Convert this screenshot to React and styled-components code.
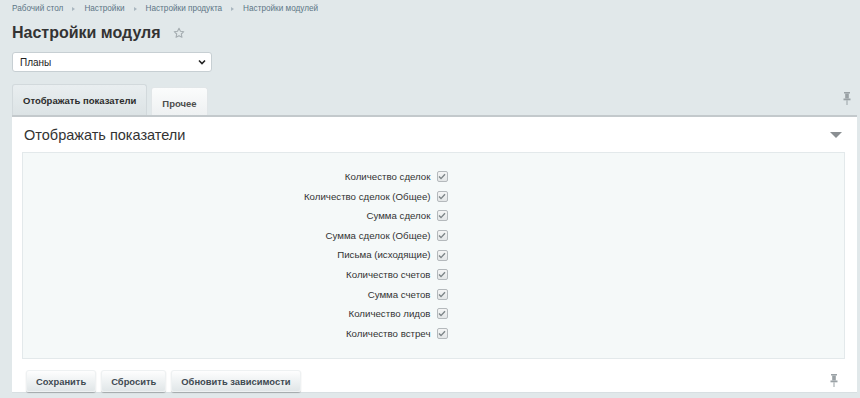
import React from 'react';
import styled, { createGlobalStyle } from 'styled-components';

const GlobalStyle = createGlobalStyle`
  html, body {
    margin: 0;
    padding: 0;
    background: #e1e8ea;
    font-family: 'Liberation Sans', Arial, sans-serif;
    color: #333;
  }
`;

const Page = styled.div`
  width: 860px;
  height: 398px;
  overflow: hidden;
  padding: 0 3px 0 12px;
  box-sizing: border-box;
`;

const Breadcrumbs = styled.div`
  display: flex;
  align-items: center;
  gap: 9px;
  height: 17px;
  font-size: 8.2px;
  color: #5d7686;
`;

const Arrow = styled.span`
  width: 0;
  height: 0;
  border-left: 3px solid #a9b7bf;
  border-top: 2.5px solid transparent;
  border-bottom: 2.5px solid transparent;
`;

const TitleRow = styled.div`
  display: flex;
  align-items: center;
  gap: 12px;
  height: 32px;
`;

const Title = styled.h1`
  margin: 0;
  font-size: 16px;
  font-weight: bold;
  color: #333;
`;

const Select = styled.div`
  width: 200px;
  height: 20px;
  box-sizing: border-box;
  margin-top: 3px;
  background: #fff;
  border: 1px solid #c7cfd3;
  border-radius: 3px;
  display: flex;
  align-items: center;
  justify-content: space-between;
  padding: 0 5px 0 7px;
  font-size: 10px;
  color: #222;
`;

const TabBar = styled.div`
  display: flex;
  align-items: flex-end;
  gap: 4px;
  height: 43px;
`;

const Tab = styled.div`
  height: ${(p) => (p.active ? 31 : 28)}px;
  box-sizing: border-box;
  padding: ${(p) => (p.active ? 0 : 3)}px 10px 0;
  display: flex;
  align-items: center;
  font-size: 9.5px;
  font-weight: bold;
  color: ${(p) => (p.active ? '#2c2c2c' : '#4d4d4d')};
  background: ${(p) =>
    p.active
      ? 'linear-gradient(#e9eef0, #dce3e5)'
      : 'linear-gradient(#fbfcfc, #eef1f2)'};
  border: 1px solid ${(p) => (p.active ? '#d2d9dc' : '#e1e6e8')};
  border-bottom: none;
  border-radius: 3px 3px 0 0;
`;

const PinSlot = styled.div`
  margin-left: auto;
  align-self: center;
  margin-top: 12px;
  margin-right: 6px;
`;

const Panel = styled.div`
  background: #fff;
  border-top: 2px solid #c3c9cc;
  box-shadow: 0 1px 0 #d8dfe2;
  padding: 0 12px 0 10px;
`;

const PanelHead = styled.div`
  display: flex;
  align-items: center;
  justify-content: space-between;
  height: 35px;
  padding: 0 2px;
`;

const PanelTitle = styled.div`
  font-size: 14.5px;
  color: #333;
`;

const Caret = styled.span`
  width: 0;
  height: 0;
  border-top: 6px solid #8a8f92;
  border-left: 6px solid transparent;
  border-right: 6px solid transparent;
  margin-right: 1px;
`;

const Fields = styled.div`
  background: #f5f9f9;
  border: 1px solid #e3e9eb;
  padding: 14px 0 15px;
  display: grid;
  grid-template-columns: 1fr 1fr;
`;

const Label = styled.label`
  text-align: right;
  font-size: 9.7px;
  color: #333;
  padding-right: 3px;
  height: 19.6px;
  line-height: 19.6px;
`;

const CheckCell = styled.div`
  display: flex;
  align-items: center;
  height: 19.6px;
  padding-left: 3px;
`;

const Box = styled.span`
  width: 9px;
  height: 9px;
  border: 1px solid #b4b9bc;
  border-radius: 2px;
  background: linear-gradient(#f4f5f5, #e3e6e7);
  display: flex;
  align-items: center;
  justify-content: center;
`;

const Footer = styled.div`
  display: flex;
  align-items: center;
  gap: 5px;
  padding: 11px 0 0 4px;
`;

const Button = styled.button`
  height: 22px;
  padding: 0 10px;
  font-family: inherit;
  font-size: 9.4px;
  font-weight: bold;
  color: #3f4a52;
  background: linear-gradient(#ffffff, #dfe5e7);
  border: none;
  border-radius: 3px;
  box-shadow: 0 1px 1px rgba(0, 0, 0, 0.25), inset 0 0 0 1px #eef1f2;
`;

const FooterPin = styled.div`
  margin-left: auto;
  margin-right: 7px;
  margin-top: 2px;
`;

function Pin() {
  return (
    <svg width="8" height="13" viewBox="0 0 8 13">
      <rect x="1" y="0" width="6" height="1.5" fill="#9aa1a5" />
      <rect x="2.2" y="1.5" width="3.6" height="5" fill="#9aa1a5" />
      <rect x="0.5" y="6.5" width="7" height="1.8" fill="#9aa1a5" />
      <rect x="3.5" y="8.3" width="1" height="4.7" fill="#9aa1a5" />
    </svg>
  );
}

function Star() {
  return (
    <svg width="12" height="12" viewBox="0 0 24 24">
      <path
        d="M12 2.5l2.9 6.1 6.6.8-4.9 4.6 1.3 6.6L12 17.3l-5.9 3.3 1.3-6.6-4.9-4.6 6.6-.8z"
        fill="none"
        stroke="#a5adb1"
        strokeWidth="2.2"
        strokeLinejoin="round"
      />
    </svg>
  );
}

function Check() {
  return (
    <svg width="8" height="7" viewBox="0 0 8 7">
      <path d="M1 3.6l2 2L7 1.2" fill="none" stroke="#7d8588" strokeWidth="1.4" />
    </svg>
  );
}

const crumbs = ['Рабочий стол', 'Настройки', 'Настройки продукта', 'Настройки модулей'];

const fields = [
  'Количество сделок',
  'Количество сделок (Общее)',
  'Сумма сделок',
  'Сумма сделок (Общее)',
  'Письма (исходящие)',
  'Количество счетов',
  'Сумма счетов',
  'Количество лидов',
  'Количество встреч',
];

export default function App() {
  return (
    <Page>
      <GlobalStyle />
      <Breadcrumbs>
        {crumbs.map((c, i) => (
          <React.Fragment key={c}>
            {i > 0 && <Arrow />}
            <span>{c}</span>
          </React.Fragment>
        ))}
      </Breadcrumbs>
      <TitleRow>
        <Title>Настройки модуля</Title>
        <Star />
      </TitleRow>
      <Select>
        <span>Планы</span>
        <svg width="8" height="6" viewBox="0 0 8 6">
          <path d="M1 1.5l3 3 3-3" fill="none" stroke="#222" strokeWidth="1.6" />
        </svg>
      </Select>
      <TabBar>
        <Tab active>Отображать показатели</Tab>
        <Tab>Прочее</Tab>
        <PinSlot>
          <Pin />
        </PinSlot>
      </TabBar>
      <Panel>
        <PanelHead>
          <PanelTitle>Отображать показатели</PanelTitle>
          <Caret />
        </PanelHead>
        <Fields>
          {fields.map((f) => (
            <React.Fragment key={f}>
              <Label>{f}</Label>
              <CheckCell>
                <Box>
                  <Check />
                </Box>
              </CheckCell>
            </React.Fragment>
          ))}
        </Fields>
        <Footer>
          <Button>Сохранить</Button>
          <Button>Сбросить</Button>
          <Button>Обновить зависимости</Button>
          <FooterPin>
            <Pin />
          </FooterPin>
        </Footer>
      </Panel>
    </Page>
  );
}
